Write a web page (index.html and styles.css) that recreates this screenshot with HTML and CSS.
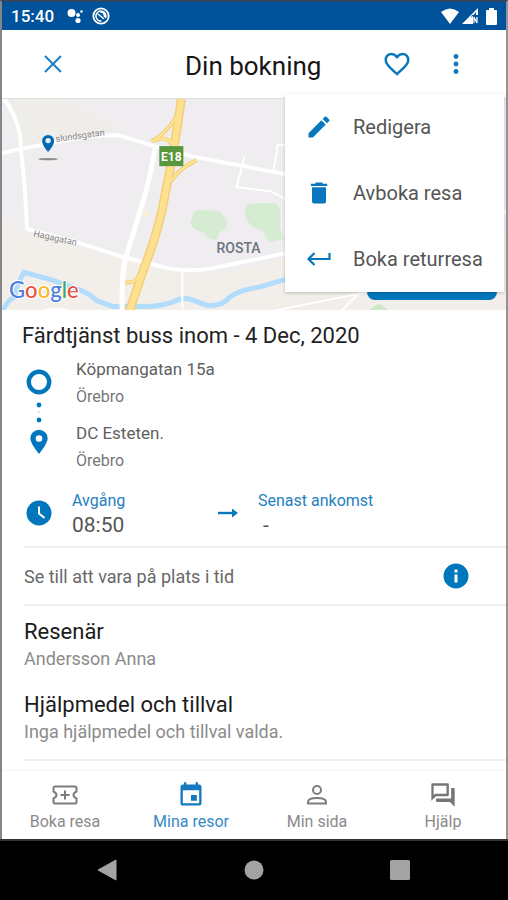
FILE: index.html
```html
<!DOCTYPE html>
<html lang="sv">
<head>
<meta charset="utf-8">
<meta name="viewport" content="width=device-width, initial-scale=1">
<title>Din bokning</title>
<link rel="stylesheet" href="styles.css">
</head>
<body>
<div class="phone">
  <div class="status">
    <span class="clock">15:40</span>
    <svg width="18" height="18" viewBox="0 0 18 18" fill="#fff"><circle cx="5.500" cy="6" r="4"/><circle cx="12" cy="8" r="2"/><circle cx="12" cy="13.500" r="2.600"/><circle cx="15.500" cy="4.500" r="1.200"/></svg>
    <svg width="18" height="18" viewBox="0 0 18 18" fill="none" stroke="#fff"><circle cx="9" cy="9" r="7.700" stroke-width="1.800"/><path d="M13.500 11a5 5 0 1 0-4 3M6 7l6 5M8.500 5c3 0 4 2 4 5" stroke-width="1.500"/></svg>
    <div class="signals">
      <svg width="18" height="16" viewBox="0 0 18 16" fill="#fff"><path d="M0 4Q9-3 18 4L9 16Z"/></svg>
      <svg width="17" height="16" viewBox="0 0 17 16"><path d="M0 16 16 0V7H11V16Z" fill="#fff"/><path d="M9 10l5-6v3h-4z" fill="#00529a"/><path d="M12 15V9l3 6V9" fill="none" stroke="#fff" stroke-width="1.200"/></svg>
      <svg width="11" height="17" viewBox="0 0 11 17" fill="#fff"><path d="M3 0h5v2h2q1 0 1 1v13q0 1-1 1H1q-1 0-1-1V3q0-1 1-1h2z"/></svg>
    </div>
  </div>

  <header class="appbar">
    <button class="icon-button" aria-label="Stäng"><svg width="18" height="18" viewBox="0 0 18 18" fill="none" stroke="#1b7fc2" stroke-width="2"><path d="M1 1 17 17M17 1 1 17"/></svg></button>
    <h1>Din bokning</h1>
    <button class="icon-button" aria-label="Favorit"><svg width="30" height="30" viewBox="0 0 24 24" fill="#0b78be"><path d="M16.500 3c-1.740 0-3.410.81-4.500 2.090C10.910 3.810 9.240 3 7.500 3 4.420 3 2 5.420 2 8.500c0 3.780 3.400 6.860 8.550 11.540L12 21.350l1.450-1.320C18.600 15.360 22 12.280 22 8.500 22 5.420 19.580 3 16.500 3zm-4.400 15.550-.1.100-.1-.1C7.140 14.240 4 11.390 4 8.500 4 6.500 5.500 5 7.500 5c1.540 0 3.040.99 3.570 2.360h1.870C13.460 5.990 14.960 5 16.500 5c2 0 3.500 1.500 3.500 3.500 0 2.890-3.140 5.740-7.900 10.050z"/></svg></button>
    <button class="icon-button" aria-label="Fler val"><svg width="30" height="30" viewBox="0 0 30 30" fill="#0b78be"><circle cx="15" cy="7.500" r="2.400"/><circle cx="15" cy="15" r="2.400"/><circle cx="15" cy="22.500" r="2.400"/></svg></button>
  </header>

  <section class="map" aria-label="Karta">
    <svg class="map-art" viewBox="2 98 503 212" preserveAspectRatio="xMinYMin slice">
      <path d="M2 98H510V312H2Z" fill="#efedef"/>
      <path d="M2 215 27 232 80 246 130 260 215 272 285 257 510 230V312H2Z" fill="#f2efeb"/>
      <path d="M2 98H60L120 130 60 136 21 146Z" fill="#efedea"/>
      <path d="M194 210Q202 208 220 210L227 221Q226 230 219 231L216 238Q208 240 205 232 190 228 190 220Z" fill="#d5ecd3"/>
      <path d="M246 204Q250 201 276 202 282 210 279 226L284 238 269 241 262 230Q246 224 244 213Z" fill="#d5ecd3"/>
      <path d="M368 310Q377 296 388 310Z" fill="#cdeac6"/>
      <path d="M2 311Q8 298 14 296 18 280 24 271L50 278 67 284Q88 290 96 299L112 305H142Q164 305 176 299 185 295 193 299L207 304Q222 305 229 296 239 288 258 286L285 278" fill="none" stroke="#b1dcfb" stroke-width="5"/>
      <g fill="none" stroke="#fff" stroke-linejoin="round">
        <path d="M2 152 20 148 62 140Q92 134 118 134L154 145 195 156 285 173 400 195" stroke-width="4"/>
        <path d="M4 98Q16 114 20 134L21 148 25 190 27 228 80 242 124 256 169 267Q188 271 212 267L285 252 505 210" stroke-width="4"/>
        <path d="M155 145Q151 172 144 196L125 258Q121 275 122 310" stroke-width="5"/>
        <path d="M182 269V307M244 156 236 186 270 190 285 198M273 170 277 144H300M40 310Q55 305 72 310M270 310 370 290M340 310 365 285" stroke-width="2"/>
      </g>
      <g fill="none" stroke="#f3cf75">
        <path d="M177 114Q164 135 151 140M154 140Q166 133 173 145M196 159Q178 168 171 180M125 281Q138 283 142 266" stroke-width="4"/>
        <path d="M181 98Q174 148 165 192 159 228 144 266L128 313" stroke-width="9"/>
      </g>
      <path d="M177 114Q164 135 151 140M154 140Q166 133 173 145M196 159Q178 168 171 180M125 281Q138 283 142 266" fill="none" stroke="#ffe493" stroke-width="2"/>
      <path d="M181 98Q174 148 165 192 159 228 144 266L128 313" fill="none" stroke="#ffe090" stroke-width="6"/>
      <circle cx="145" cy="212" r="3" fill="#f8f3cf"/>
      <path d="M159 145H183V165H159Z" fill="#58983c"/>
      <text x="171" y="160" text-anchor="middle" class="map-sign">E18</text>
      <text x="56" y="141" transform="rotate(-8 56 141)" class="map-street">slundsgatan</text>
      <text x="33" y="235" transform="rotate(12 33 235)" class="map-street">Hagagatan</text>
      <text x="216" y="252" class="map-area">ROSTA</text>
      <ellipse cx="48" cy="158" rx="10" ry="1.200" fill="#8e8e8c"/>
      <path d="M48 151Q42 144 42 140A6 6 0 0 1 54 140Q54 144 48 151Z" fill="#0068b3"/>
      <circle cx="48" cy="139.500" r="2.700" fill="#e8eef2"/>
      <text x="9" y="297" class="map-brand"><tspan fill="#4c80de">G</tspan><tspan fill="#e65145">o</tspan><tspan fill="#f4b92f">o</tspan><tspan fill="#4c80de">g</tspan><tspan fill="#45a35b">l</tspan><tspan fill="#e65145">e</tspan></text>
    </svg>
    <button class="map-action" aria-label="Visa karta"></button>
    <div class="menu" role="menu">
      <button role="menuitem"><svg width="28" height="28" viewBox="0 0 24 24" fill="#0877bd"><path d="M3 17.250V21h3.750L17.810 9.940l-3.750-3.750L3 17.250zM20.710 7.040c.39-.39.39-1.020 0-1.410l-2.340-2.340c-.39-.39-1.020-.39-1.410 0l-1.830 1.830 3.750 3.750 1.830-1.830z"/></svg>Redigera</button>
      <button role="menuitem"><svg width="28" height="28" viewBox="0 0 24 24" fill="#0877bd"><path d="M6 19c0 1.100.9 2 2 2h8c1.100 0 2-.9 2-2V7H6v12zM19 4h-3.500l-1-1h-5l-1 1H5v2h14V4z"/></svg>Avboka resa</button>
      <button role="menuitem"><svg width="28" height="28" viewBox="0 0 28 28" fill="none" stroke="#0877bd" stroke-width="2.200"><path d="M24.500 8V14H4M9.500 8 3.500 14 9.500 20"/></svg>Boka returresa</button>
    </div>
  </section>

  <main class="details">
    <h2 class="trip-title">Färdtjänst buss inom - 4 Dec, 2020</h2>
    <div class="route">
      <svg width="26" height="86" viewBox="0 0 26 86" fill="#0077bd"><circle cx="13" cy="13" r="10.200" fill="none" stroke="#0077bd" stroke-width="4.400"/><circle cx="13" cy="36" r="2.400"/><circle cx="13" cy="43" r="1" fill="#c5dced"/><circle cx="13" cy="51" r="2.400"/><path fill-rule="evenodd" d="M13 85Q4.300 74 4.300 69.500A8.700 8.700 0 0 1 21.700 69.500Q21.700 74 13 85ZM13 66.200A3.300 3.300 0 1 0 13 72.800A3.300 3.300 0 1 0 13 66.200Z"/></svg>
      <div class="stops">
        <div><p class="place">Köpmangatan 15a</p><p class="town">Örebro</p></div>
        <div><p class="place">DC Esteten.</p><p class="town">Örebro</p></div>
      </div>
    </div>
    <div class="times">
      <svg width="26" height="26" viewBox="0 0 26 26"><circle cx="13" cy="13" r="12.500" fill="#0077bd"/><path d="M13 6.500V13.500L18.500 18" fill="none" stroke="#fff" stroke-width="2"/></svg>
      <div class="departure"><p class="label">Avgång</p><p class="time">08:50</p></div>
      <svg width="20" height="12" viewBox="0 0 20 12"><path d="M0 6H16" stroke="#0b78be" stroke-width="2.400"/><path d="M14 1.500 20 6 14 10.500Z" fill="#0b78be"/></svg>
      <div class="arrival"><p class="label">Senast ankomst</p><p class="time dash">-</p></div>
    </div>
    <div class="notice">
      <p>Se till att vara på plats i tid</p>
      <button class="icon-button" aria-label="Information"><svg width="26" height="26" viewBox="0 0 26 26"><circle cx="13" cy="13" r="12.500" fill="#0077bd"/><path d="M11.500 6.500h3v3h-3zM11.500 11.500h3v8h-3z" fill="#fff"/></svg></button>
    </div>
    <section class="facts">
      <div><h3>Resenär</h3><p>Andersson Anna</p></div>
      <div><h3>Hjälpmedel och tillval</h3><p>Inga hjälpmedel och tillval valda.</p></div>
    </section>
  </main>

  <nav class="tabs">
    <a href="#boka"><svg width="28" height="28" viewBox="0 0 28 28" fill="none" stroke="#7d7d7d" stroke-width="2"><path d="M4 5.500H24Q25.500 5.500 25.500 7V10.500Q22.500 12 22.500 14T25.500 17.500V21Q25.500 22.500 24 22.500H4Q2.500 22.500 2.500 21V17.500Q5.500 16 5.500 14T2.500 10.500V7Q2.500 5.500 4 5.500ZM14 9.500V18.500M9.500 14H18.500"/></svg>Boka resa</a>
    <a href="#resor" class="active" aria-current="page"><svg width="28" height="28" viewBox="0 0 24 24" fill="#1479be"><path d="M17 12h-5v5h5v-5zM16 1v2H8V1H6v2H5c-1.110 0-1.990.9-1.990 2L3 19c0 1.100.89 2 2 2h14c1.100 0 2-.9 2-2V5c0-1.100-.9-2-2-2h-1V1h-2zm3 18H5V8h14v11z"/></svg>Mina resor</a>
    <a href="#sida"><svg width="28" height="28" viewBox="0 0 28 28" fill="none" stroke="#7d7d7d" stroke-width="2"><circle cx="14" cy="9" r="4"/><path d="M5 22.500V21Q5 17 14 17T23 21V22.500Z"/></svg>Min sida</a>
    <a href="#hjalp"><svg width="28" height="28" viewBox="0 0 24 24" fill="#757575"><path d="M15 4v7H5.170L4 12.170V4h11m1-2H3c-.55 0-1 .45-1 1v14l4-4h10c.55 0 1-.45 1-1V3c0-.55-.45-1-1-1zm5 4h-2v9H6v2c0 .55.45 1 1 1h11l4 4V7c0-.55-.45-1-1-1z"/></svg>Hjälp</a>
  </nav>

  <div class="system">
    <button aria-label="Tillbaka"><svg width="20" height="22" viewBox="0 0 20 22"><path d="M19 1V21L1 11Z" fill="#a3a3a3" stroke="#a3a3a3" stroke-linejoin="round"/></svg></button>
    <button aria-label="Hem"><svg width="20" height="20" viewBox="0 0 20 20"><circle cx="10" cy="10" r="9.500" fill="#a3a3a3"/></svg></button>
    <button aria-label="Översikt"><svg width="20" height="20" viewBox="0 0 20 20"><rect width="20" height="20" rx="1.500" fill="#a3a3a3"/></svg></button>
  </div>
</div>
</body>
</html>
```
FILE: styles.css
```css
* { box-sizing: border-box; }
body, h1, h2, h3, p { margin: 0; }
body { font-family: Roboto, "Liberation Sans", sans-serif; background: #fff; }
button { border: 0; padding: 0; background: none; font: inherit; color: inherit; }
svg { display: block; flex: none; }

.phone {
  display: flex;
  flex-direction: column;
  min-height: 100vh;
  border-top: 2px solid #34475f;
  border-left: 2px solid #85858a;
  border-right: 2px solid #929297;
}

.status {
  display: flex;
  align-items: center;
  gap: 8px;
  height: 28px;
  padding: 0 9px;
  background: #00529a;
  color: #fff;
}
.clock { font-size: 17px; font-weight: 500; margin-right: 4px; }
.signals { display: flex; align-items: center; gap: 3px; margin-left: auto; }
.signals svg:last-child { margin-left: 4px; }

.appbar {
  display: grid;
  grid-template-columns: 48px 1fr 48px 48px;
  align-items: center;
  column-gap: 11px;
  height: 68px;
  padding: 0 26px 0 27px;
}
.appbar h1 { padding: 3px 0 0 97px; font-size: 26px; font-weight: 400; line-height: 32px; color: #161616; white-space: nowrap; }
.icon-button { display: grid; place-items: center; height: 48px; }

.map { position: relative; height: 212px; border-top: 1px solid #dedede; }
.map-art { width: 100%; height: 100%; }
.map-sign { font-size: 12px; font-weight: 700; fill: #fff; }
.map-street { font-size: 9px; fill: #858585; }
.map-area { font-size: 14px; font-weight: 500; fill: #6c7580; }
.map-brand { font-family: Lato, sans-serif; font-size: 22px; font-weight: 500; stroke: #fff; stroke-width: 2px; paint-order: stroke; }
.map-action {
  position: absolute;
  right: 9px;
  bottom: 10px;
  width: 130px;
  height: 44px;
  border-radius: 8px;
  background: #0077bd;
}
.menu {
  position: absolute;
  top: -5px;
  right: 2px;
  width: 219px;
  background: #fff;
  box-shadow: 0 1px 3px rgba(0, 0, 0, .22);
}
.menu button {
  display: flex;
  align-items: center;
  gap: 20px;
  width: 100%;
  height: 66px;
  padding-left: 20px;
  font-size: 20px;
  color: #555;
  text-align: left;
}

.details { flex: 1; padding: 12px 0 0 20px; }
.trip-title { font-size: 22px; font-weight: 400; line-height: 28px; color: #222; }
.route { display: flex; gap: 24px; margin: 6px 0 0 4px; }
.route > svg { margin-top: 13px; }
.stops { display: grid; row-gap: 10px; line-height: 27px; }
.place { font-size: 17px; color: #606060; }
.town { font-size: 16px; color: #777; }
.times {
  display: flex;
  align-items: center;
  margin: 14px 0 0 4px;
  height: 50px;
}
.departure { width: 166px; padding-left: 20px; }
.arrival { padding-left: 20px; }
.label { font-size: 16px; line-height: 24px; color: #2480c1; }
.time { font-size: 21px; line-height: 24px; color: #555; }
.dash { padding-left: 5px; }
.notice {
  display: flex;
  align-items: center;
  justify-content: space-between;
  height: 60px;
  margin: 8px 0 0 2px;
  padding-right: 37px;
  border-top: 2px solid #efefef;
  border-bottom: 2px solid #efefef;
  font-size: 18px;
  color: #686868;
}
.facts { display: grid; row-gap: 19px; margin-left: 2px; padding: 12px 0 14px; border-bottom: 2px solid #efefef; }
.facts h3 { font-size: 22px; font-weight: 400; line-height: 28px; color: #1b1b1b; }
.facts p { font-size: 18px; line-height: 26px; color: #8b8b8b; }

.tabs {
  display: grid;
  grid-template-columns: repeat(4, 1fr);
  height: 69px;
  padding-top: 10px;
  border-top: 1px solid #f4f4f4;
}
.tabs a {
  display: flex;
  flex-direction: column;
  align-items: center;
  gap: 4px;
  font-size: 16px;
  line-height: 18px;
  color: #8a8a8a;
  text-decoration: none;
}
.tabs .active { color: #3489c5; }

.system {
  display: flex;
  align-items: center;
  justify-content: space-between;
  height: 61px;
  margin-left: -2px;
  margin-right: -2px;
  padding: 0 98px 2px 97px;
  border-top: 2px solid #333;
  background: #000;
}
```
